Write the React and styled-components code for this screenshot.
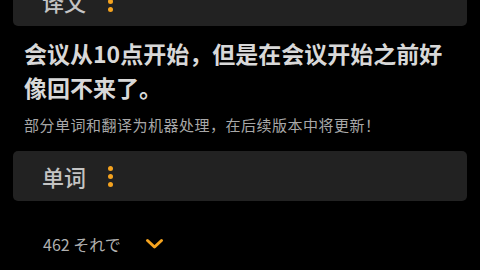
import React from "react";
import styled, { createGlobalStyle } from "styled-components";

const GlobalStyle = createGlobalStyle`
  html, body {
    margin: 0;
    padding: 0;
    background: #000;
  }
  body {
    font-family: "Noto Sans CJK SC", "Noto Sans", sans-serif;
    overflow: hidden;
  }
`;

const Page = styled.div`
  width: 480px;
  height: 270px;
  overflow: hidden;
  padding: 0 13px;
  box-sizing: border-box;
`;

const Card = styled.div`
  height: 50px;
  margin-top: ${(p) => p.$top || 0}px;
  background: #222222;
  border-radius: 5px;
  display: flex;
  align-items: center;
  padding-left: 29px;
  gap: 22px;
`;

const CardTitle = styled.span`
  font-size: 22px;
  line-height: 1;
  color: #c4c4c4;
  font-weight: 500;
`;

const Dots = styled.div`
  display: flex;
  flex-direction: column;
  gap: 3px;
  span {
    width: 5px;
    height: 5px;
    border-radius: 50%;
    background: #f5a31f;
  }
`;

const Heading = styled.h1`
  margin: 10px 0 0;
  padding: 0 8px 0 11px;
  font-size: 23px;
  line-height: 34px;
  font-weight: 700;
  color: #d8d8d8;
`;

const Note = styled.p`
  margin: 10px 0 0;
  padding-left: 11px;
  font-size: 15px;
  line-height: 22px;
  letter-spacing: 0.5px;
  color: #a8a8a8;
`;

const WordRow = styled.div`
  margin-top: 31px;
  padding-left: 30px;
  display: flex;
  align-items: center;
  gap: 24px;
  height: 24px;
`;

const WordText = styled.span`
  font-family: "Noto Sans CJK JP", "Noto Sans", sans-serif;
  font-size: 16px;
  color: #b0b0b0;
`;

function MoreDots() {
  return (
    <Dots>
      <span />
      <span />
      <span />
    </Dots>
  );
}

function Chevron() {
  return (
    <svg width="19" height="12" viewBox="0 0 19 12">
      <polyline
        points="2.5,2.5 9.5,9 16.5,2.5"
        fill="none"
        stroke="#f5a31f"
        strokeWidth="3"
        strokeLinecap="round"
        strokeLinejoin="round"
      />
    </svg>
  );
}

export default function App() {
  return (
    <>
      <GlobalStyle />
      <Page>
        <Card $top={-24}>
          <CardTitle>译文</CardTitle>
          <MoreDots />
        </Card>
        <Heading>会议从10点开始，但是在会议开始之前好像回不来了。</Heading>
        <Note>部分单词和翻译为机器处理，在后续版本中将更新！</Note>
        <Card $top={15}>
          <CardTitle>单词</CardTitle>
          <MoreDots />
        </Card>
        <WordRow>
          <WordText>462 それで</WordText>
          <Chevron />
        </WordRow>
      </Page>
    </>
  );
}
